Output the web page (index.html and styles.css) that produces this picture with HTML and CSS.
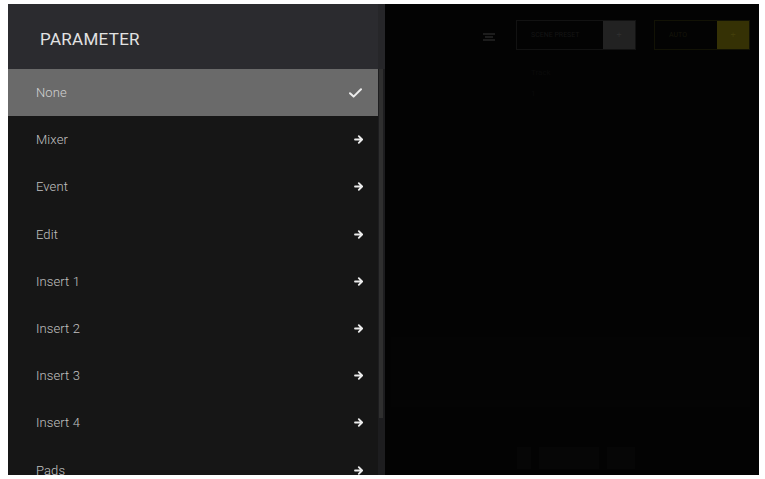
FILE: index.html
```html
<!DOCTYPE html>
<html>
<head>
<meta charset="utf-8">
<link rel="stylesheet" href="styles.css">
</head>
<body>
<div class="frame">
  <aside class="panel">
    <div class="panel-main">
      <div class="panel-head">PARAMETER</div>
      <ul class="list">
        <li class="item selected"><span>None</span>
          <svg class="ico check" viewBox="0 0 13 10" width="13" height="10"><polyline points="1,5.2 4.6,8.6 12,1.2" /></svg>
        </li>
        <li class="item"><span>Mixer</span><svg class="ico arrow" viewBox="0 0 10 9" width="10" height="9"><path d="M1 4.5h7.2M4.8 1.2l3.3 3.3-3.3 3.3"/></svg></li>
        <li class="item"><span>Event</span><svg class="ico arrow" viewBox="0 0 10 9" width="10" height="9"><path d="M1 4.5h7.2M4.8 1.2l3.3 3.3-3.3 3.3"/></svg></li>
        <li class="item"><span>Edit</span><svg class="ico arrow" viewBox="0 0 10 9" width="10" height="9"><path d="M1 4.5h7.2M4.8 1.2l3.3 3.3-3.3 3.3"/></svg></li>
        <li class="item"><span>Insert 1</span><svg class="ico arrow" viewBox="0 0 10 9" width="10" height="9"><path d="M1 4.5h7.2M4.8 1.2l3.3 3.3-3.3 3.3"/></svg></li>
        <li class="item"><span>Insert 2</span><svg class="ico arrow" viewBox="0 0 10 9" width="10" height="9"><path d="M1 4.5h7.2M4.8 1.2l3.3 3.3-3.3 3.3"/></svg></li>
        <li class="item"><span>Insert 3</span><svg class="ico arrow" viewBox="0 0 10 9" width="10" height="9"><path d="M1 4.5h7.2M4.8 1.2l3.3 3.3-3.3 3.3"/></svg></li>
        <li class="item"><span>Insert 4</span><svg class="ico arrow" viewBox="0 0 10 9" width="10" height="9"><path d="M1 4.5h7.2M4.8 1.2l3.3 3.3-3.3 3.3"/></svg></li>
        <li class="item"><span>Pads</span><svg class="ico arrow" viewBox="0 0 10 9" width="10" height="9"><path d="M1 4.5h7.2M4.8 1.2l3.3 3.3-3.3 3.3"/></svg></li>
      </ul>
    </div>
    <div class="scroll">
      <div class="scroll-head"></div>
      <div class="thumb"></div>
    </div>
  </aside>
  <main class="stage">
    <div class="toolbar">
      <svg class="tb-icon" viewBox="0 0 12 8" width="12" height="8"><path d="M0 0h12v2H0zM2 3h8v2H2zM0 6h12v2H0z"/></svg>
      <div class="field">
        <span class="field-text">SCENE PRESET</span>
        <span class="field-btn">+</span>
      </div>
      <div class="field yellow">
        <span class="field-text">AUTO</span>
        <span class="field-btn">+</span>
      </div>
    </div>
    <div class="dim-lines">
      <span class="dim-text">Track</span>
      <span class="dim-text short">1</span>
    </div>
    <div class="stage-fill"></div>
    <div class="band"></div>
    <div class="bottom">
      <span class="b-a"></span><span class="b-b"></span><span class="b-c"></span>
    </div>
  </main>
</div>
</body>
</html>
```

FILE: styles.css
```css
html, body {
  margin: 0;
  padding: 0;
  background: #ffffff;
}
body {
  padding: 4px 0 0 8px;
  font-family: Roboto, "Liberation Sans", sans-serif;
}
.frame {
  width: 751px;
  height: 471px;
  display: flex;
  background: #030303;
  overflow: hidden;
}
.panel {
  width: 377px;
  flex: none;
  display: flex;
  background: #161616;
}
.panel-main {
  width: 370px;
  display: flex;
  flex-direction: column;
}
.panel-head {
  height: 65px;
  flex: none;
  background: #2b2b2f;
  color: #e2e2e2;
  font-size: 17px;
  font-weight: 400;
  letter-spacing: 0.3px;
  padding-left: 32px;
  display: flex;
  align-items: center;
  padding-top: 4px;
  box-sizing: border-box;
}
.list {
  list-style: none;
  margin: 0;
  padding: 0;
}
.item {
  height: 47.2px;
  display: flex;
  align-items: center;
  justify-content: space-between;
  padding: 0 14px 0 28px;
  color: #c2c2c2;
  font-size: 13px;
  font-weight: 300;
  letter-spacing: 0.1px;
}
.item.selected {
  background: #6a6a6a;
  color: #d2d2d2;
  padding-right: 16px;
}
.ico {
  fill: none;
  stroke: #ececec;
  stroke-linecap: round;
  stroke-linejoin: round;
}
.check { stroke-width: 2; }
.arrow { stroke-width: 1.8; }
.scroll {
  width: 7px;
  flex: none;
  background: #1d1d1f;
  display: flex;
  flex-direction: column;
}
.scroll-head {
  height: 65px;
  background: #262629;
}
.thumb {
  width: 4px;
  margin-left: 1px;
  height: 349px;
  background: #2f2f2f;
}
.stage {
  flex: 1;
  display: flex;
  flex-direction: column;
  padding: 0 9px 0 0;
  box-sizing: border-box;
}
.toolbar {
  height: 30px;
  margin-top: 16px;
  display: flex;
  align-items: center;
  justify-content: flex-end;
  gap: 18px;
}
.tb-icon {
  fill: #1c1c1c;
  margin-right: 3px;
  margin-top: 4px;
}
.field {
  height: 30px;
  display: flex;
  align-items: stretch;
  border: 1px solid #121212;
  box-sizing: border-box;
}
.field-text {
  width: 86px;
  color: #141414;
  font-size: 7px;
  display: flex;
  align-items: center;
  padding-left: 14px;
  box-sizing: border-box;
}
.field-btn {
  width: 32px;
  background: #222222;
  color: #2e2e2e;
  font-size: 9px;
  display: flex;
  align-items: center;
  justify-content: center;
}
.field.yellow {
  border-color: #121205;
}
.field.yellow .field-text {
  width: 62px;
  color: #15150a;
}
.field.yellow .field-btn {
  background: #353105;
  color: #423e0a;
}
.dim-lines {
  display: flex;
  flex-direction: column;
  gap: 12px;
  padding: 18px 0 0 146px;
}
.dim-text {
  color: #0a0a0a;
  font-size: 8px;
}
.stage-fill { flex: 1; }
.band {
  height: 70px;
  background: #040404;
  margin: 0 0 40px 6px;
}
.bottom {
  height: 22px;
  display: flex;
  gap: 8px;
  padding-left: 132px;
  margin-bottom: 6px;
}
.bottom span { background: #060606; }
.b-a { width: 14px; }
.b-b { width: 60px; }
.b-c { width: 28px; }
```
